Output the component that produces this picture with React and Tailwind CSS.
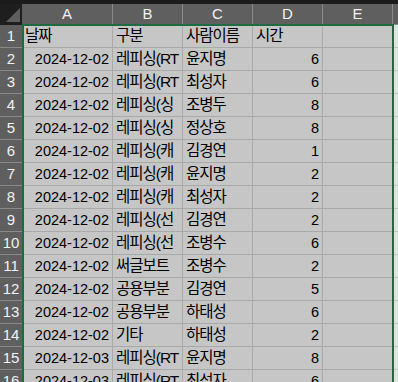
const COLS = [
  { key: "A", w: "w-[91px]" },
  { key: "B", w: "w-[70px]" },
  { key: "C", w: "w-[70px]" },
  { key: "D", w: "w-[70px]" },
  { key: "E", w: "w-[70px]" },
];

// 구분 column is clipped by the neighbouring cell, so only the visible part is kept
const ROWS = [
  ["날짜", "구분", "사람이름", "시간"],
  ["2024-12-02", "레피싱(RT", "윤지명", 6],
  ["2024-12-02", "레피싱(RT", "최성자", 6],
  ["2024-12-02", "레피싱(싱", "조병두", 8],
  ["2024-12-02", "레피싱(싱", "정상호", 8],
  ["2024-12-02", "레피싱(캐", "김경연", 1],
  ["2024-12-02", "레피싱(캐", "윤지명", 2],
  ["2024-12-02", "레피싱(캐", "최성자", 2],
  ["2024-12-02", "레피싱(선", "김경연", 2],
  ["2024-12-02", "레피싱(선", "조병수", 6],
  ["2024-12-02", "써글보트", "조병수", 2],
  ["2024-12-02", "공용부분", "김경연", 5],
  ["2024-12-02", "공용부분", "하태성", 6],
  ["2024-12-02", "기타", "하태성", 2],
  ["2024-12-03", "레피싱(RT", "윤지명", 8],
  ["2024-12-03", "레피싱(RT", "최성자", 6],
];

const font = { fontFamily: '"Liberation Sans", "Noto Sans CJK KR", sans-serif' };

function Cell({ w, value, idx }) {
  const isNum = idx === 3 && typeof value === "number";
  const isDate = idx === 0 && /^\d{4}-/.test(String(value ?? ""));
  const right = isNum || isDate;
  return (
    <div
      className={`${w} h-[23px] shrink-0 border-r border-b border-[#a9a9a9] bg-[#c6c6c6] flex items-end overflow-hidden whitespace-nowrap pb-[3px] leading-[16px] text-black ${
        right ? "justify-end pr-[3px] text-[14.5px]" : "justify-start pl-[3px] text-[15.5px] tracking-[-1px]"
      }`}
    >
      {value ?? ""}
    </div>
  );
}

export default function App() {
  return (
    <div className="relative w-[398px] h-[382px] overflow-hidden bg-[#1b1b1b]" style={font}>
      {/* column headers */}
      <div className="flex h-[21px] mt-[4px]">
        <div className="w-[22px] shrink-0 relative bg-[#1e1e1e]">
          <svg className="absolute left-0 top-0" width="22" height="21" viewBox="0 0 22 21">
            <polygon points="6,18 20,4 20,18" fill="#5e5e5e" />
          </svg>
        </div>
        {COLS.map((c) => (
          <div
            key={c.key}
            className={`${c.w} shrink-0 flex items-center justify-center bg-[#5f5f5f] border-r border-b border-[#8a8a8a] text-[15px] text-[#f2f2f2]`}
          >
            {c.key}
          </div>
        ))}
        <div className="flex-1 bg-[#5f5f5f] border-b border-[#8a8a8a]" />
      </div>

      {/* rows */}
      {ROWS.map((row, r) => (
        <div key={r} className="flex">
          <div className="w-[22px] h-[23px] shrink-0 flex items-center justify-center bg-[#5f5f5f] border-b border-[#8a8a8a] text-[15px] text-[#f2f2f2]">
            {r + 1}
          </div>
          {COLS.map((c, i) => (
            <Cell key={c.key} w={c.w} value={row[i]} idx={i} />
          ))}
          <div className="flex-1 h-[23px] bg-[#e2e2e2] border-b border-[#c4c4c4]" />
        </div>
      ))}

      {/* selection outline */}
      <div className="absolute left-[22px] top-[24px] w-[372px] h-[400px] border-2 border-[#1d6b3f] pointer-events-none" />
    </div>
  );
}
